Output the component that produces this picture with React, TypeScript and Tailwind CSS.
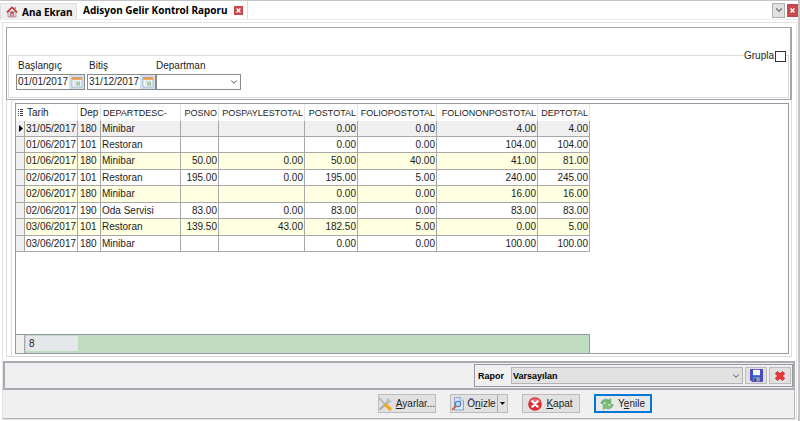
import { useState } from 'react';
import type { ReactNode } from 'react';
import { ChevronDown } from 'lucide-react';

interface ReportRow {
    date: string;
    dep: string;
    desc: string;
    values: string[];
}

const columns = [
    { label: 'POSNO', width: 'w-[38px]' },
    { label: 'POSPAYLESTOTAL', width: 'w-[86px]' },
    { label: 'POSTOTAL', width: 'w-[53px]' },
    { label: 'FOLIOPOSTOTAL', width: 'w-[79px]' },
    { label: 'FOLIONONPOSTOTAL', width: 'w-[101px]' },
    { label: 'DEPTOTAL', width: 'w-[52px]' },
];

const rows: ReportRow[] = [
    { date: '31/05/2017', dep: '180', desc: 'Minibar', values: ['', '', '0.00', '0.00', '4.00', '4.00'] },
    { date: '01/06/2017', dep: '101', desc: 'Restoran', values: ['', '', '0.00', '0.00', '104.00', '104.00'] },
    { date: '01/06/2017', dep: '180', desc: 'Minibar', values: ['50.00', '0.00', '50.00', '40.00', '41.00', '81.00'] },
    { date: '02/06/2017', dep: '101', desc: 'Restoran', values: ['195.00', '0.00', '195.00', '5.00', '240.00', '245.00'] },
    { date: '02/06/2017', dep: '180', desc: 'Minibar', values: ['', '', '0.00', '0.00', '16.00', '16.00'] },
    { date: '02/06/2017', dep: '190', desc: 'Oda Servisi', values: ['83.00', '0.00', '83.00', '0.00', '83.00', '83.00'] },
    { date: '03/06/2017', dep: '101', desc: 'Restoran', values: ['139.50', '43.00', '182.50', '5.00', '0.00', '5.00'] },
    { date: '03/06/2017', dep: '180', desc: 'Minibar', values: ['', '', '0.00', '0.00', '100.00', '100.00'] },
];

function rowStyle(index: number) {
    if (index === 0) return 'h-4 bg-[#f0f0f0]';
    return index % 2 === 0 ? 'h-[17px] bg-[#ffffe1]' : 'h-4 bg-white';
}

function HomeIcon() {
    return (
        <svg className="h-3 w-3 shrink-0" viewBox="0 0 12 12" aria-hidden="true">
            <path d="M2 5.5h8V11H2z" fill="#d9dde2" stroke="#777" strokeWidth=".6" />
            <path d="M8.3 1.2h1.4v2.6L8.3 2.6z" fill="#777" />
            <path d="M.8 6.4 6 1.4l5.2 5" fill="none" stroke="#c8323a" strokeWidth="1.5" />
            <path d="M4.4 6h3.2v5H4.4z" fill="#c8323a" />
            <path d="M5.5 7.6h1V11h-1z" fill="#fff" />
        </svg>
    );
}

function CalendarIcon() {
    return (
        <svg className="h-3 w-3" viewBox="0 0 12 12" aria-hidden="true">
            <path d="M1 1.5h10V11H1z" fill="#f8fafc" stroke="#9aabba" strokeWidth=".7" />
            <path d="M1 1.2h10v2.6H1z" fill="#eb9a4a" />
            <path d="M3 5.2h6M3 6.8h1.6M3 8.6h1.6" stroke="#b6c6d2" strokeWidth=".8" />
            <path d="M5.2 6.2h4v3.4h-4z" fill="#8fc08a" />
            <path d="M6.4 7.2h1.6v1.2H6.4z" fill="#e8f4e4" />
        </svg>
    );
}

function ToolsIcon() {
    return (
        <svg className="h-[14px] w-[14px] shrink-0" viewBox="0 0 14 14" aria-hidden="true">
            <path d="M2.4 12 10 4.6" stroke="#a9adb3" strokeWidth="2.2" strokeLinecap="round" />
            <path d="M8.2 4.8C7.8 2.4 9.8.6 12 1.1L10.6 2.6l.8 1.2 1.9-.6c.2 2.3-1.8 3.6-3.8 2.9z" fill="#b9bdc3" />
            <path d="M1.4 1.4 6.8 7" stroke="#b4b8bf" strokeWidth="2" strokeLinecap="round" />
            <path d="M7.8 8 12 12" stroke="#f5a81c" strokeWidth="3.2" strokeLinecap="round" />
        </svg>
    );
}

function PreviewIcon() {
    return (
        <svg className="h-[14px] w-[14px] shrink-0" viewBox="0 0 14 14" aria-hidden="true">
            <path d="M3.5.7h6l3 3V13h-9z" fill="#dbe8f8" stroke="#7d9dcb" strokeWidth=".9" />
            <path d="M9.3.7v3.2h3.2" fill="#fff" stroke="#7d9dcb" strokeWidth=".8" />
            <circle cx="7" cy="7" r="2.7" fill="#b8dcf6" stroke="#4f7fb8" strokeWidth="1.1" />
            <path d="M4.8 9.3 1.6 12.4" stroke="#c66a3a" strokeWidth="2" strokeLinecap="round" />
        </svg>
    );
}

function CloseIcon() {
    return (
        <svg className="h-[14px] w-[14px] shrink-0" viewBox="0 0 14 14" aria-hidden="true">
            <circle cx="7" cy="7" r="6.8" fill="#dd2b2f" />
            <path d="M1.6 5.5a5.6 5.6 0 0 1 10.8 0Q7 3.6 1.6 5.5z" fill="#f0787a" />
            <path d="m4.4 4.4 5.2 5.2m0-5.2L4.4 9.6" stroke="#fff" strokeWidth="2.2" strokeLinecap="round" />
        </svg>
    );
}

function RefreshIcon() {
    return (
        <svg className="h-[14px] w-[14px] shrink-0" viewBox="0 0 14 14" aria-hidden="true">
            <path d="M.8 6.4C1.4 2.6 6.2 1 9 3l1.8-1.4v5H5.6l1.6-1.7C5.6 4.3 3.9 4.9 3.2 6.6z" fill="#6fb96d" stroke="#4f9c54" strokeWidth=".5" />
            <path d="M13.2 7.6c-.6 3.8-5.4 5.4-8.2 3.4l-1.8 1.4v-5h5.2L6.8 9.1c1.6.6 3.3 0 4-1.7z" fill="#7cc07a" stroke="#4f9c54" strokeWidth=".5" />
        </svg>
    );
}

function SaveIcon() {
    return (
        <svg className="h-[13px] w-[13px]" viewBox="0 0 13 13" aria-hidden="true">
            <path d="M.5.5h12v12H2l-1.5-1.5z" fill="#3a55d0" stroke="#5a3cb4" />
            <path d="M3 .8h7v5.4H3z" fill="#f4f6fb" />
            <path d="M3.4 8.2h6.4v4.2H3.4z" fill="#8fa0b8" />
            <path d="M4.4 9.2h1.8v3.2H4.4z" fill="#26357f" />
        </svg>
    );
}

function DeleteIcon() {
    return (
        <svg className="h-3 w-3" viewBox="0 0 12 12" aria-hidden="true">
            <path d="m2.2 2.4 7.6 7.2m0-7.2L2.2 9.6" stroke="#c83a62" strokeWidth="4" />
            <path d="m2.4 2.6 7.2 6.8m0-6.8L2.4 9.4" stroke="#ee3328" strokeWidth="2.8" />
        </svg>
    );
}

function SmallCross() {
    return (
        <svg className="h-[5px] w-[5px]" viewBox="0 0 5 5" aria-hidden="true">
            <path d="m.6.6 3.8 3.8m0-3.8L.6 4.4" stroke="#fff" strokeWidth="1.4" />
        </svg>
    );
}

function DateField({ id, label, initial }: { id: string; label: string; initial: string }) {
    const [value, setValue] = useState(initial);
    return (
        <div className="flex w-[69px] flex-col gap-0.5">
            <label htmlFor={id} className="px-0.5">{label}</label>
            <div className="flex h-4 items-center border border-[#8a8a8a] bg-white">
                <input
                    id={id}
                    type="text"
                    value={value}
                    onChange={(e) => setValue(e.target.value)}
                    className="w-[52px] min-w-0 pl-px outline-none"
                />
                <button aria-label={`${label} takvim`} className="flex h-full flex-1 items-center justify-center bg-[#cfe0f0]">
                    <CalendarIcon />
                </button>
            </div>
        </div>
    );
}

function ActionButton({ icon, children, primary = false }: { icon: ReactNode; children: ReactNode; primary?: boolean }) {
    return (
        <button
            className={
                primary
                    ? 'flex h-[19px] w-[58px] items-center justify-center gap-1 border-2 border-[#0078d7] bg-[#e8e8e8] whitespace-nowrap'
                    : 'flex h-[19px] w-[58px] items-center justify-center gap-1 border border-[#bcbcbc] bg-[#e1e1e1] whitespace-nowrap'
            }
        >
            {icon}
            <span>{children}</span>
        </button>
    );
}

export default function App() {
    const [grouped, setGrouped] = useState(false);

    return (
        <div className="flex min-h-screen flex-col border-t border-r-2 border-[#c4c4c4] bg-white font-['Liberation_Sans',Arial,sans-serif] text-[10px] leading-3 text-[#1c1c1c]">
            {/* Tabs */}
            <div className="flex h-[19px] items-stretch border-b border-[#ececec] font-['Noto_Sans',Tahoma,sans-serif] text-[10px] font-bold text-black">
                <button className="mt-0.5 flex w-[77px] items-center gap-1 border border-b-0 border-[#dedede] bg-[#f0f0f0] pl-[5px] whitespace-nowrap">
                    <HomeIcon />
                    Ana Ekran
                </button>
                <div className="flex items-center gap-[7px] border-r border-[#dedede] pr-1 pl-1.5 whitespace-nowrap">
                    <button>Adisyon Gelir Kontrol Raporu</button>
                    <button aria-label="Sekmeyi kapat" className="flex h-[9px] w-[9px] items-center justify-center bg-[#c9484c]">
                        <SmallCross />
                    </button>
                </div>
                <div className="ml-auto flex items-center gap-0.5">
                    <button aria-label="Sekmeler" className="flex h-[15px] w-[13px] items-center justify-center border border-[#b0b0b0] bg-[#e1e1e1]">
                        <ChevronDown className="h-2.5 w-2.5 text-[#777]" strokeWidth={3} />
                    </button>
                    <button aria-label="Kapat" className="flex h-[13px] w-[11px] items-center justify-center bg-[#c9484c]">
                        <SmallCross />
                    </button>
                </div>
            </div>

            {/* Page frame */}
            <div className="mt-0.5 mr-px mb-px ml-0.5 flex flex-1 flex-col border border-[#e2e2e2]">
                {/* Filters */}
                <div className="mt-1 mr-1 ml-[3px] border border-r-2 border-[#a5a7ae] px-px pt-[27px] pb-px">
                    <fieldset className="flex h-[43px] items-start border border-[#dcdcdc] pl-[7px]">
                        <div className="flex gap-0.5 pt-1">
                            <DateField id="start" label="Başlangıç" initial="01/01/2017" />
                            <DateField id="end" label="Bitiş" initial="31/12/2017" />
                        </div>
                        <div className="flex flex-col gap-0.5 pt-1">
                            <label htmlFor="department">Departman</label>
                            <div className="grid w-[85px] items-center">
                                <select id="department" className="col-start-1 row-start-1 h-4 appearance-none border border-[#8a8a8a] bg-white">
                                    <option></option>
                                </select>
                                <ChevronDown className="pointer-events-none col-start-1 row-start-1 mr-0.5 h-2.5 w-2.5 justify-self-end text-[#333]" />
                            </div>
                        </div>
                        <label className="-mt-1.5 mr-0.5 ml-auto flex items-center gap-px bg-white">
                            Grupla
                            <input
                                type="checkbox"
                                checked={grouped}
                                onChange={(e) => setGrouped(e.target.checked)}
                                className="h-[11px] w-[11px] appearance-none border border-[#333] bg-white checked:bg-[#333]"
                            />
                        </label>
                    </fieldset>
                </div>

                {/* Report grid */}
                <div className="mr-1 ml-[3px] flex flex-1 border border-t-0 border-[#dcdcdc] pl-1">
                    <div className="flex flex-1 flex-col border-l border-[#dcdcdc] pt-[3px] pr-0.5 pb-0.5 pl-[3px]">
                        <div className="flex flex-1 flex-col border border-[#96989f]">
                            <table className="w-[574px] table-fixed border-separate border-spacing-0">
                                <thead>
                                    <tr className="h-[17px] text-[9px]">
                                        <th className="w-[9px] p-0 font-normal">
                                            <svg className="mx-auto h-[7px] w-[5px]" viewBox="0 0 5 7" aria-hidden="true">
                                                <path d="M0 .5h1M2 .5h3M0 2.5h1M2 2.5h3M0 4.5h1M2 4.5h3M0 6.5h1M2 6.5h3" stroke="#444" strokeWidth="1" />
                                            </svg>
                                        </th>
                                        <th className="w-[53px] border-r border-[#e4e4e4] p-0 pl-0.5 text-left text-[10px] font-normal">Tarih</th>
                                        <th className="w-[23px] border-r border-[#e4e4e4] p-0 pl-0.5 text-left text-[10px] font-normal">Dep</th>
                                        <th className="w-[80px] border-r border-[#e4e4e4] p-0 pl-0.5 text-left font-normal">DEPARTDESC-</th>
                                        {columns.map((column) => (
                                            <th key={column.label} className={`${column.width} border-r border-[#e4e4e4] p-0 pr-px text-right font-normal`}>
                                                {column.label}
                                            </th>
                                        ))}
                                    </tr>
                                </thead>
                                <tbody>
                                    {rows.map((row, index) => (
                                        <tr key={index} className={rowStyle(index)}>
                                            <td className="border-r border-b border-[#a8a8a8] bg-[#f0f0f0] p-0">
                                                {index === 0 && (
                                                    <svg className="ml-[3px] h-[7px] w-1" viewBox="0 0 4 7" aria-hidden="true">
                                                        <path d="M0 0 4 3.5 0 7z" fill="#000" />
                                                    </svg>
                                                )}
                                            </td>
                                            <td className="border-r border-b border-[#a8a8a8] p-0 pl-px">{row.date}</td>
                                            <td className="border-r border-b border-[#a8a8a8] p-0 pl-0.5">{row.dep}</td>
                                            <td className="border-r border-b border-[#a8a8a8] p-0 pl-px">{row.desc}</td>
                                            {row.values.map((value, column) => (
                                                <td key={column} className="border-r border-b border-[#a8a8a8] p-0 pr-px text-right">
                                                    {value}
                                                </td>
                                            ))}
                                        </tr>
                                    ))}
                                </tbody>
                            </table>
                            <div className="mt-auto flex h-[19px] w-[574px] border-t border-r border-[#96989f]">
                                <div className="w-[9px] border-r border-[#a8a8a8] bg-[#f0f0f0]" />
                                <div className="flex flex-1 bg-[#c0dcc0] pt-px pb-0.5 pl-px">
                                    <div className="flex w-[52px] items-center bg-[#e4e8ea] pl-[3px]">{rows.length}</div>
                                </div>
                            </div>
                        </div>
                    </div>
                </div>

                {/* Saved report picker */}
                <div className="mt-1 mr-px flex h-[29px] justify-end border-2 border-[#a9abb2] bg-[#f0f0f0] py-px">
                    <div className="flex items-center gap-0.5 border border-[#96989f] px-px">
                        <label htmlFor="report" className="w-[33px] pl-0.5 text-[9px] font-bold text-black">Rapor</label>
                        <div className="grid w-[232px] items-center">
                            <select id="report" className="col-start-1 row-start-1 h-[17px] appearance-none border border-[#b4b4b4] bg-[#e1e1e1] pl-px text-[9px] font-bold text-black">
                                <option>Varsayılan</option>
                            </select>
                            <ChevronDown className="pointer-events-none col-start-1 row-start-1 mr-0.5 h-2.5 w-2.5 justify-self-end text-[#333]" />
                        </div>
                        <button aria-label="Kaydet" className="flex h-[17px] w-[22px] items-center justify-center border border-[#bcbcbc] bg-[#e1e1e1]">
                            <SaveIcon />
                        </button>
                        <button aria-label="Sil" className="flex h-[17px] w-[22px] items-center justify-center border border-[#bcbcbc] bg-[#e1e1e1]">
                            <DeleteIcon />
                        </button>
                    </div>
                </div>

                {/* Actions */}
                <div className="mr-px flex h-[29px] items-start justify-center gap-[14px] border-r border-b border-[#b5b5bb] bg-[#f0f0f0] pt-1 pl-[232px]">
                    <ActionButton icon={<ToolsIcon />}><u>A</u>yarlar...</ActionButton>
                    <div className="flex h-[19px] w-[58px] border border-[#bcbcbc] bg-[#e1e1e1]">
                        <button className="flex flex-1 items-center justify-center gap-0.5 whitespace-nowrap">
                            <PreviewIcon />
                            <span>Ö<u>n</u>izle</span>
                        </button>
                        <button aria-label="Önizleme seçenekleri" className="flex w-[10px] items-center justify-center border-l border-[#a8a8a8]">
                            <svg className="h-[3px] w-[5px]" viewBox="0 0 5 3" aria-hidden="true">
                                <path d="M0 0h5L2.5 3z" fill="#000" />
                            </svg>
                        </button>
                    </div>
                    <ActionButton icon={<CloseIcon />}><u>K</u>apat</ActionButton>
                    <ActionButton icon={<RefreshIcon />} primary>Y<u>e</u>nile</ActionButton>
                </div>
            </div>
        </div>
    );
}
